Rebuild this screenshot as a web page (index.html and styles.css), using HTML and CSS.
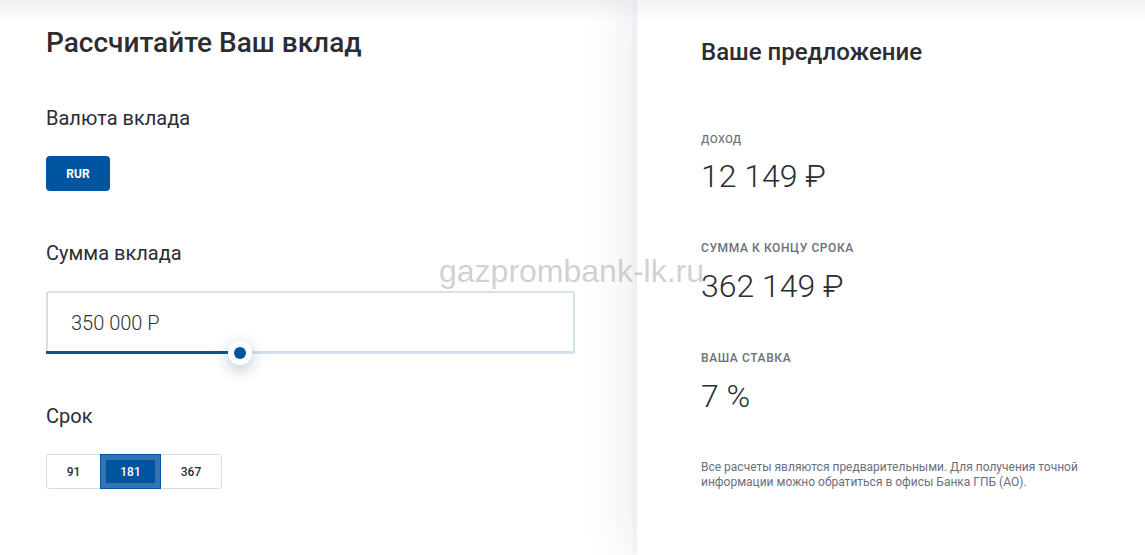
FILE: index.html
```html
<!DOCTYPE html>
<html lang="ru">
<head>
<meta charset="utf-8">
<link rel="stylesheet" href="styles.css">
</head>
<body>
<div class="page">
  <section class="calc">
    <h1 class="title">Рассчитайте Ваш вклад</h1>
    <div class="label label-currency">Валюта вклада</div>
    <button class="currency">RUR</button>
    <div class="label label-sum">Сумма вклада</div>
    <div class="field">
      <div class="field-value">350 000 Р</div>
      <div class="track">
        <div class="track-fill" style="width: 194px"></div>
        <div class="thumb" style="left: 194px"><span class="thumb-dot"></span></div>
      </div>
    </div>
    <div class="label label-term">Срок</div>
    <div class="terms">
      <button class="term">91</button>
      <button class="term term-active"><span>181</span></button>
      <button class="term">367</button>
    </div>
  </section>
  <section class="offer">
    <h2 class="offer-title">Ваше предложение</h2>
    <div class="stat stat-first">
      <div class="stat-label stat-label-lower">доход</div>
      <div class="stat-value">12 149 ₽</div>
    </div>
    <div class="stat">
      <div class="stat-label">СУММА К КОНЦУ СРОКА</div>
      <div class="stat-value">362 149 ₽</div>
    </div>
    <div class="stat">
      <div class="stat-label">ВАША СТАВКА</div>
      <div class="stat-value">7 %</div>
    </div>
    <p class="note">Все расчеты являются предварительными. Для получения точной информации можно обратиться в офисы Банка ГПБ (АО).</p>
  </section>
  <div class="watermark">gazprombank-lk.ru</div>
</div>
</body>
</html>
```
FILE: styles.css
```css
* { box-sizing: border-box; }
html, body { margin: 0; padding: 0; }
body {
  width: 1145px;
  height: 555px;
  overflow: hidden;
  font-family: Roboto, "Noto Sans", sans-serif;
  color: #2b2d33;
  background: linear-gradient(#eff0f2 0px, #ffffff 22px);
}
.page {
  position: relative;
  display: flex;
  height: 555px;
}
.calc {
  width: 637px;
  flex: none;
  padding: 0 0 0 46px;
}
.title {
  margin: 26px 0 0;
  font-size: 28px;
  font-weight: 500;
  line-height: 33px;
}
.label {
  font-size: 20px;
  line-height: 24px;
  font-weight: 400;
}
.label-currency { margin-top: 47px; }
.label-sum { margin-top: 50px; }
.label-term { margin-top: 50px; }
.currency {
  display: block;
  margin-top: 26px;
  width: 64px;
  height: 35px;
  border: none;
  border-radius: 4px;
  background: #0055a0;
  color: #fff;
  font-family: Roboto, sans-serif;
  font-weight: 700;
  font-size: 12px;
  padding: 0;
}
.field {
  position: relative;
  margin-top: 26px;
  width: 529px;
  height: 63px;
  border: 2px solid #d3e1ee;
  border-radius: 3px;
}
.field-value {
  padding: 18px 0 0 23px;
  font-size: 20px;
  font-weight: 300;
  line-height: 24px;
  color: #2f3136;
}
.track {
  position: absolute;
  left: -2px;
  right: -2px;
  bottom: -2px;
  height: 3px;
  background: #d3e1ee;
}
.track-fill {
  height: 3px;
  background: #0055a0;
}
.thumb {
  position: absolute;
  top: -10px;
  width: 24px;
  height: 24px;
  margin-left: -12px;
  border-radius: 50%;
  background: #fff;
  box-shadow: 0 5px 16px rgba(40, 60, 110, 0.3);
  display: flex;
  align-items: center;
  justify-content: center;
}
.thumb-dot {
  width: 12px;
  height: 12px;
  border-radius: 50%;
  background: #0055a0;
}
.terms {
  display: flex;
  margin-top: 26px;
  width: 176px;
  height: 35px;
  border: 1px solid #d3e1ee;
  border-radius: 3px;
}
.term {
  border: none;
  background: transparent;
  font-family: Roboto, sans-serif;
  font-size: 12px;
  font-weight: 500;
  color: #2b2d33;
  padding: 0;
  height: 33px;
}
.term:nth-child(1) { width: 53px; }
.term:nth-child(3) { flex: 1; }
.term-active {
  width: 61px;
  height: 35px;
  margin-top: -1px;
  padding: 5px;
  background: #3673b0;
  border: 1px solid #0055a0;
}
.term-active span {
  display: flex;
  align-items: center;
  justify-content: center;
  height: 100%;
  background: #0055a0;
  color: #fff;
}
.offer {
  position: relative;
  flex: 1;
  padding: 0 0 0 64px;
  background: linear-gradient(#f1f2f4 0px, #ffffff 22px);
  box-shadow: -14px 0 40px rgba(40, 50, 90, 0.08), -2px 0 6px rgba(40, 50, 90, 0.04);
}
.offer-title {
  margin: 38px 0 0;
  font-size: 24px;
  font-weight: 500;
  line-height: 29px;
}
.stat-first { margin-top: 63px; }
.stat { margin-bottom: 46px; }
.stat-label {
  font-size: 12px;
  font-weight: 500;
  line-height: 16px;
  color: #6a6f7c;
  letter-spacing: 0.6px;
}
.stat-label-lower {
  font-size: 14px;
  font-weight: 400;
  letter-spacing: 0.3px;
}
.stat-value {
  margin-top: 12px;
  font-size: 32px;
  font-weight: 300;
  line-height: 36px;
  color: #2b2d33;
}
.note {
  margin: 16px 0 0;
  width: 390px;
  font-size: 12px;
  line-height: 15px;
  color: #6a6f7c;
}
.watermark {
  position: absolute;
  left: 439px;
  top: 253px;
  font-family: "Liberation Sans", Arial, sans-serif;
  font-size: 32px;
  color: rgba(170, 170, 170, 0.55);
  pointer-events: none;
}
```
